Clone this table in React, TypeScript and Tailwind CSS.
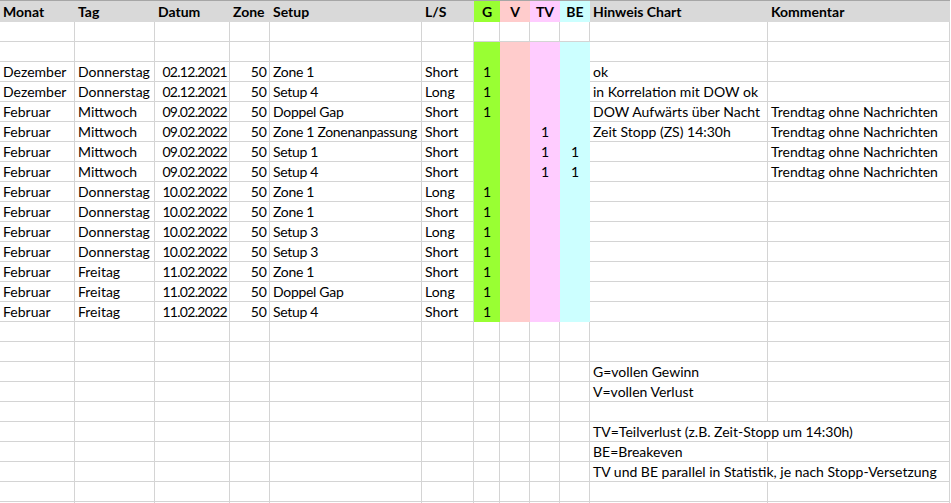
import React from "react";

type Row = string[];

const data: Row[] = [
  ["Dezember", "Donnerstag", "02.12.2021", "50", "Zone 1", "Short", "1", "", "", "", "ok", ""],
  ["Dezember", "Donnerstag", "02.12.2021", "50", "Setup 4", "Long", "1", "", "", "", "in Korrelation mit DOW ok", ""],
  ["Februar", "Mittwoch", "09.02.2022", "50", "Doppel Gap", "Short", "1", "", "", "", "DOW Aufwärts über Nacht", "Trendtag ohne Nachrichten"],
  ["Februar", "Mittwoch", "09.02.2022", "50", "Zone 1 Zonenanpassung", "Short", "", "", "1", "", "Zeit Stopp (ZS) 14:30h", "Trendtag ohne Nachrichten"],
  ["Februar", "Mittwoch", "09.02.2022", "50", "Setup 1", "Short", "", "", "1", "1", "", "Trendtag ohne Nachrichten"],
  ["Februar", "Mittwoch", "09.02.2022", "50", "Setup 4", "Short", "", "", "1", "1", "", "Trendtag ohne Nachrichten"],
  ["Februar", "Donnerstag", "10.02.2022", "50", "Zone 1", "Long", "1", "", "", "", "", ""],
  ["Februar", "Donnerstag", "10.02.2022", "50", "Zone 1", "Short", "1", "", "", "", "", ""],
  ["Februar", "Donnerstag", "10.02.2022", "50", "Setup 3", "Long", "1", "", "", "", "", ""],
  ["Februar", "Donnerstag", "10.02.2022", "50", "Setup 3", "Short", "1", "", "", "", "", ""],
  ["Februar", "Freitag", "11.02.2022", "50", "Zone 1", "Short", "1", "", "", "", "", ""],
  ["Februar", "Freitag", "11.02.2022", "50", "Doppel Gap", "Long", "1", "", "", "", "", ""],
  ["Februar", "Freitag", "11.02.2022", "50", "Setup 4", "Short", "1", "", "", "", "", ""],
];

const notes: (string | null)[] = [
  null,
  null,
  "G=vollen Gewinn",
  "V=vollen Verlust",
  null,
  "TV=Teilverlust (z.B. Zeit-Stopp um 14:30h)",
  "BE=Breakeven",
  "TV und BE parallel in Statistik, je nach Stopp-Versetzung",
  null,
  null,
];

const fills = ["bg-[#99ff33]", "bg-[#ffcccc]", "bg-[#ffccff]", "bg-[#ccffff]"];

// alignment per column: l = left, r = right, c = center
const aligns = ["l", "l", "r", "r", "l", "l", "c", "c", "c", "c", "l", "l"];

function alignClass(a: string) {
  if (a === "r") return "justify-end pr-[2px]";
  if (a === "c") return "justify-center";
  return "justify-start pl-[3px]";
}

function Cell({
  text,
  align,
  fill,
  span2,
  tracking,
}: {
  text: string;
  align: string;
  fill?: string;
  span2?: boolean;
  tracking?: string;
}) {
  const border = fill ? fill : "border-r border-b border-[#d4d4d4] bg-white";
  return (
    <div
      className={`h-[20px] flex items-center whitespace-nowrap ${span2 ? "overflow-visible col-span-2" : "overflow-hidden"} ${border} ${alignClass(align)}`}
    >
      <span className={`leading-[20px] ${tracking ?? ""}`}>{text}</span>
    </div>
  );
}

const headers = ["Monat", "Tag", "Datum", "Zone", "Setup", "L/S", "G", "V", "TV", "BE", "Hinweis Chart", "Kommentar"];
const headerAligns = ["l", "l", "l", "l", "l", "l", "c", "c", "c", "c", "l", "l"];

export default function App() {
  const emptyRow = (key: string, colored: boolean) => (
    <React.Fragment key={key}>
      {headers.map((_, i) => (
        <Cell key={i} text="" align="l" fill={colored && i >= 6 && i <= 9 ? fills[i - 6] : undefined} />
      ))}
    </React.Fragment>
  );

  return (
    <div
      className="w-[951px] h-[503px] overflow-hidden bg-white text-black text-[14px]"
      style={{ fontFamily: "Lato, 'Liberation Sans', sans-serif" }}
    >
      <div className="grid grid-cols-[75px_80px_75px_40px_152px_52px_26px_30px_30px_30px_178px_182px]">
        {headers.map((h, i) => (
          <div
            key={h}
            className={`h-[22px] border-t border-[#a6a6a6] flex items-center font-bold whitespace-nowrap ${
              i >= 6 && i <= 9 ? fills[i - 6] : "bg-[#d9d9d9]"
            } ${alignClass(headerAligns[i])}`}
          >
            <span className="leading-[20px] pt-[1px]">{h}</span>
          </div>
        ))}
        {emptyRow("b1", false)}
        {emptyRow("b2", true)}
        {data.map((r, ri) => (
          <React.Fragment key={"d" + ri}>
            {r.map((t, i) => (
              <Cell
                key={i}
                text={t}
                align={aligns[i]}
                fill={i >= 6 && i <= 9 ? fills[i - 6] : undefined}
                tracking={i === 2 ? "tracking-[-0.7px]" : i === 4 ? "tracking-[-0.3px]" : undefined}
              />
            ))}
          </React.Fragment>
        ))}
        {notes.map((n, ri) => {
          const span = !!n && n.length > 24;
          return (
            <React.Fragment key={"n" + ri}>
              {headers.slice(0, 10).map((_, i) => (
                <Cell key={i} text="" align="l" />
              ))}
              {span ? (
                <Cell text={n as string} align="l" span2 />
              ) : (
                <>
                  <Cell text={n ?? ""} align="l" />
                  <Cell text="" align="l" />
                </>
              )}
            </React.Fragment>
          );
        })}
      </div>
    </div>
  );
}
